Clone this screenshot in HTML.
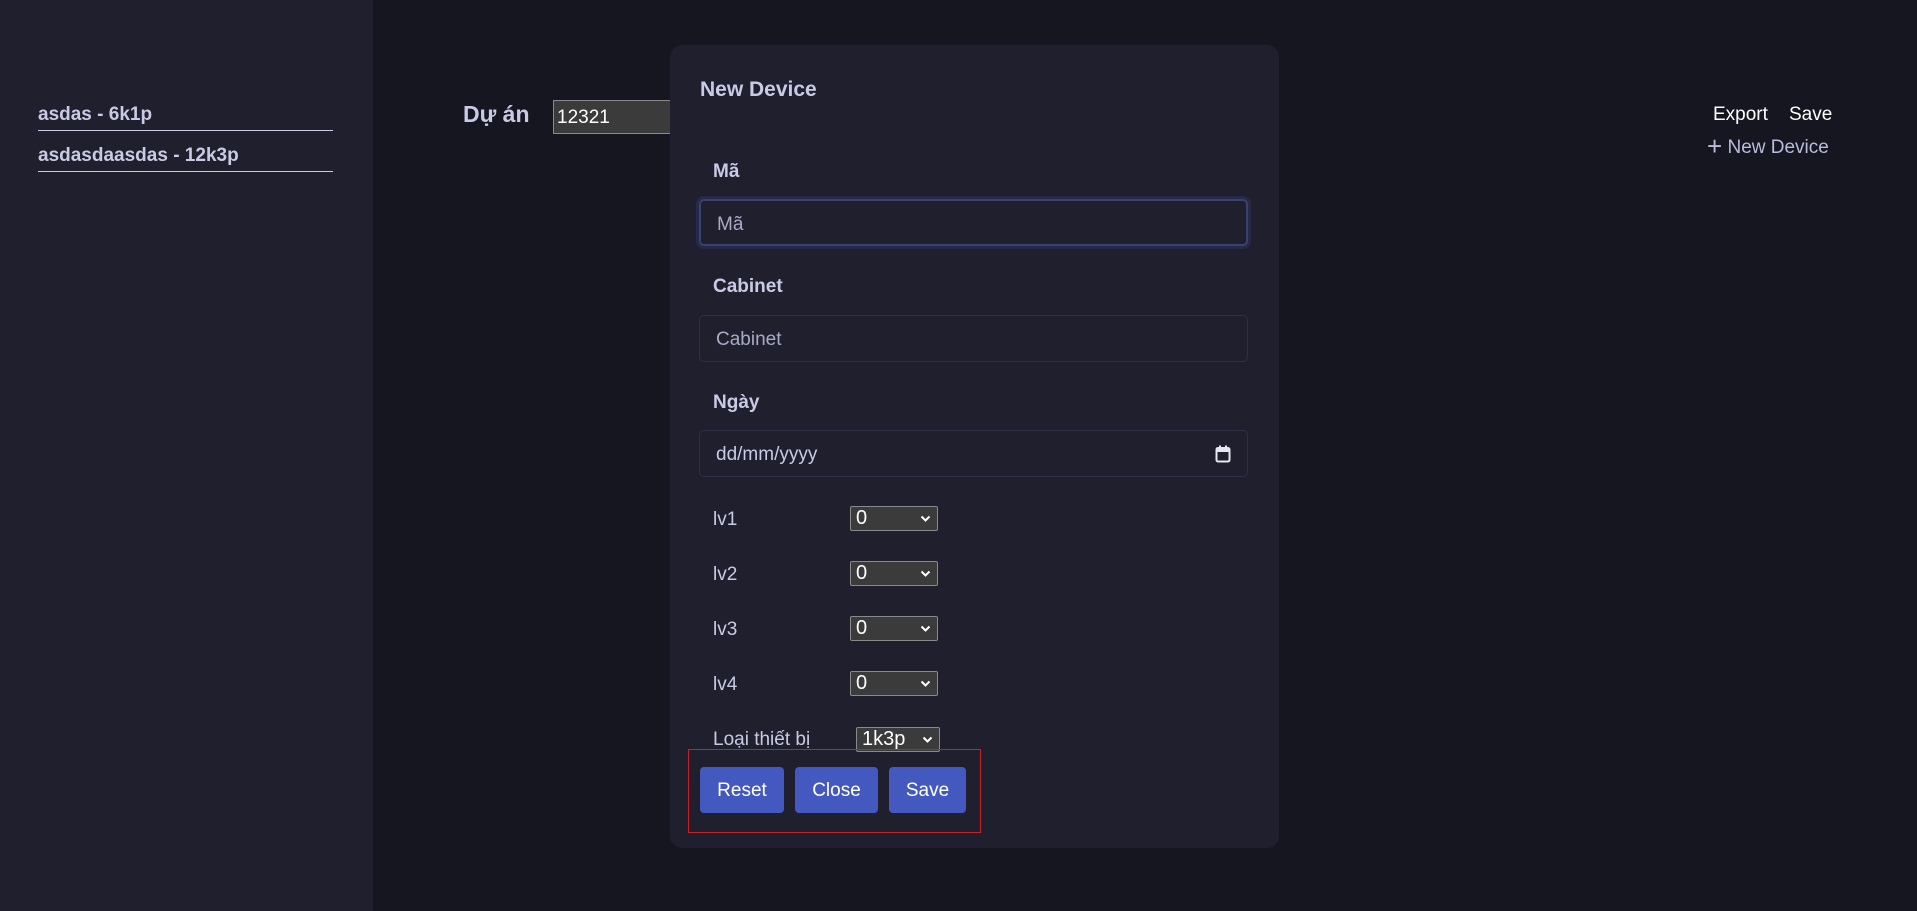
<!DOCTYPE html>
<html><head><meta charset="utf-8"><style>
*{box-sizing:border-box;margin:0;padding:0}
body{width:1917px;height:911px;background:#161621;font-family:"Liberation Sans",sans-serif;position:relative;overflow:hidden;color:#c9cbe6}
.abs{position:absolute}
.side{left:0;top:0;width:373px;height:911px;background:#1f1f2d}
.item{left:38px;width:295px;font-weight:bold;font-size:19px;border-bottom:1.5px solid #c9cbe6;padding-bottom:4px}
.modal{left:670px;top:45px;width:609px;height:803px;background:#1f1f2e;border-radius:12px}
.lbl{font-weight:bold;font-size:19px;left:713px}
.inp{left:699px;width:549px;height:47px;border:1px solid #2f2f48;border-radius:5px;font-size:19px;color:#a9abc6;padding-left:16px;line-height:47px}
.sl{font-size:19px;left:713px}
.sel{width:88px;height:25px;background:#3b3b3b;border:1px solid #8a8a8a;border-radius:2px;color:#fff;font-size:20px;line-height:23px;padding-left:5px}
.sel svg{position:absolute;right:6px;top:8px}
.btn{top:767px;height:46px;background:#4459bf;border-radius:4px;color:#fff;font-size:19px;text-align:center;line-height:48px}
</style></head><body>
<div class="abs side"></div>
<div class="abs item" style="top:104px">asdas - 6k1p</div>
<div class="abs item" style="top:145px">asdasdaasdas - 12k3p</div>
<div class="abs" style="left:463px;top:101px;font-weight:bold;font-size:23px">Dự án</div>
<div class="abs" style="left:553px;top:100px;width:130px;height:34px;background:#3b3b3b;border:1px solid #8a8a8a;color:#fff;font-size:19px;line-height:34px;padding-left:3px">12321</div>
<div class="abs" style="left:1713px;top:104px;color:#fff;font-size:19px">Export</div>
<div class="abs" style="left:1789px;top:104px;color:#fff;font-size:19px">Save</div>
<div class="abs" style="left:1707px;top:137px;font-size:19px;color:#b9bcdc"><span style="font-size:26px;line-height:19px;vertical-align:-2px">+</span> New Device</div>
<div class="abs modal"></div>
<div class="abs" style="left:700px;top:78px;font-weight:bold;font-size:21px">New Device</div>
<div class="abs lbl" style="top:161px">Mã</div>
<div class="abs inp" style="top:199px;border:2px solid #3a4270;box-shadow:0 0 0 3px #262a48">Mã</div>
<div class="abs lbl" style="top:276px">Cabinet</div>
<div class="abs inp" style="top:315px">Cabinet</div>
<div class="abs lbl" style="top:392px">Ngày</div>
<div class="abs inp" style="top:430px;color:#c9cbe6">dd/mm/yyyy
<svg class="abs" style="right:16px;top:14px" width="16" height="18" viewBox="0 0 16 18"><rect x="1.5" y="3" width="13" height="13.5" rx="1.5" fill="none" stroke="#e6e6ef" stroke-width="2"/><rect x="1.5" y="3" width="13" height="4" fill="#e6e6ef"/><rect x="4" y="0.5" width="2" height="3" fill="#e6e6ef"/><rect x="10" y="0.5" width="2" height="3" fill="#e6e6ef"/></svg></div>
<div class="abs sl" style="top:509px">lv1</div>
<div class="abs sel" style="left:850px;top:506px">0<svg width="11" height="8" viewBox="0 0 11 8"><path d="M1.5 1.5l4 4 4-4" fill="none" stroke="#fff" stroke-width="2"/></svg></div>
<div class="abs sl" style="top:564px">lv2</div>
<div class="abs sel" style="left:850px;top:561px">0<svg width="11" height="8" viewBox="0 0 11 8"><path d="M1.5 1.5l4 4 4-4" fill="none" stroke="#fff" stroke-width="2"/></svg></div>
<div class="abs sl" style="top:619px">lv3</div>
<div class="abs sel" style="left:850px;top:616px">0<svg width="11" height="8" viewBox="0 0 11 8"><path d="M1.5 1.5l4 4 4-4" fill="none" stroke="#fff" stroke-width="2"/></svg></div>
<div class="abs sl" style="top:674px">lv4</div>
<div class="abs sel" style="left:850px;top:671px">0<svg width="11" height="8" viewBox="0 0 11 8"><path d="M1.5 1.5l4 4 4-4" fill="none" stroke="#fff" stroke-width="2"/></svg></div>
<div class="abs sl" style="top:729px">Loại thiết bị</div>
<div class="abs sel" style="left:856px;top:727px;width:84px">1k3p<svg width="11" height="8" viewBox="0 0 11 8"><path d="M1.5 1.5l4 4 4-4" fill="none" stroke="#fff" stroke-width="2"/></svg></div>
<div class="abs" style="left:688px;top:749px;width:293px;height:84px;border:1.5px solid #c8202a"></div>
<div class="abs btn" style="left:700px;width:84px">Reset</div>
<div class="abs btn" style="left:795px;width:83px">Close</div>
<div class="abs btn" style="left:889px;width:77px">Save</div>
</body></html>
